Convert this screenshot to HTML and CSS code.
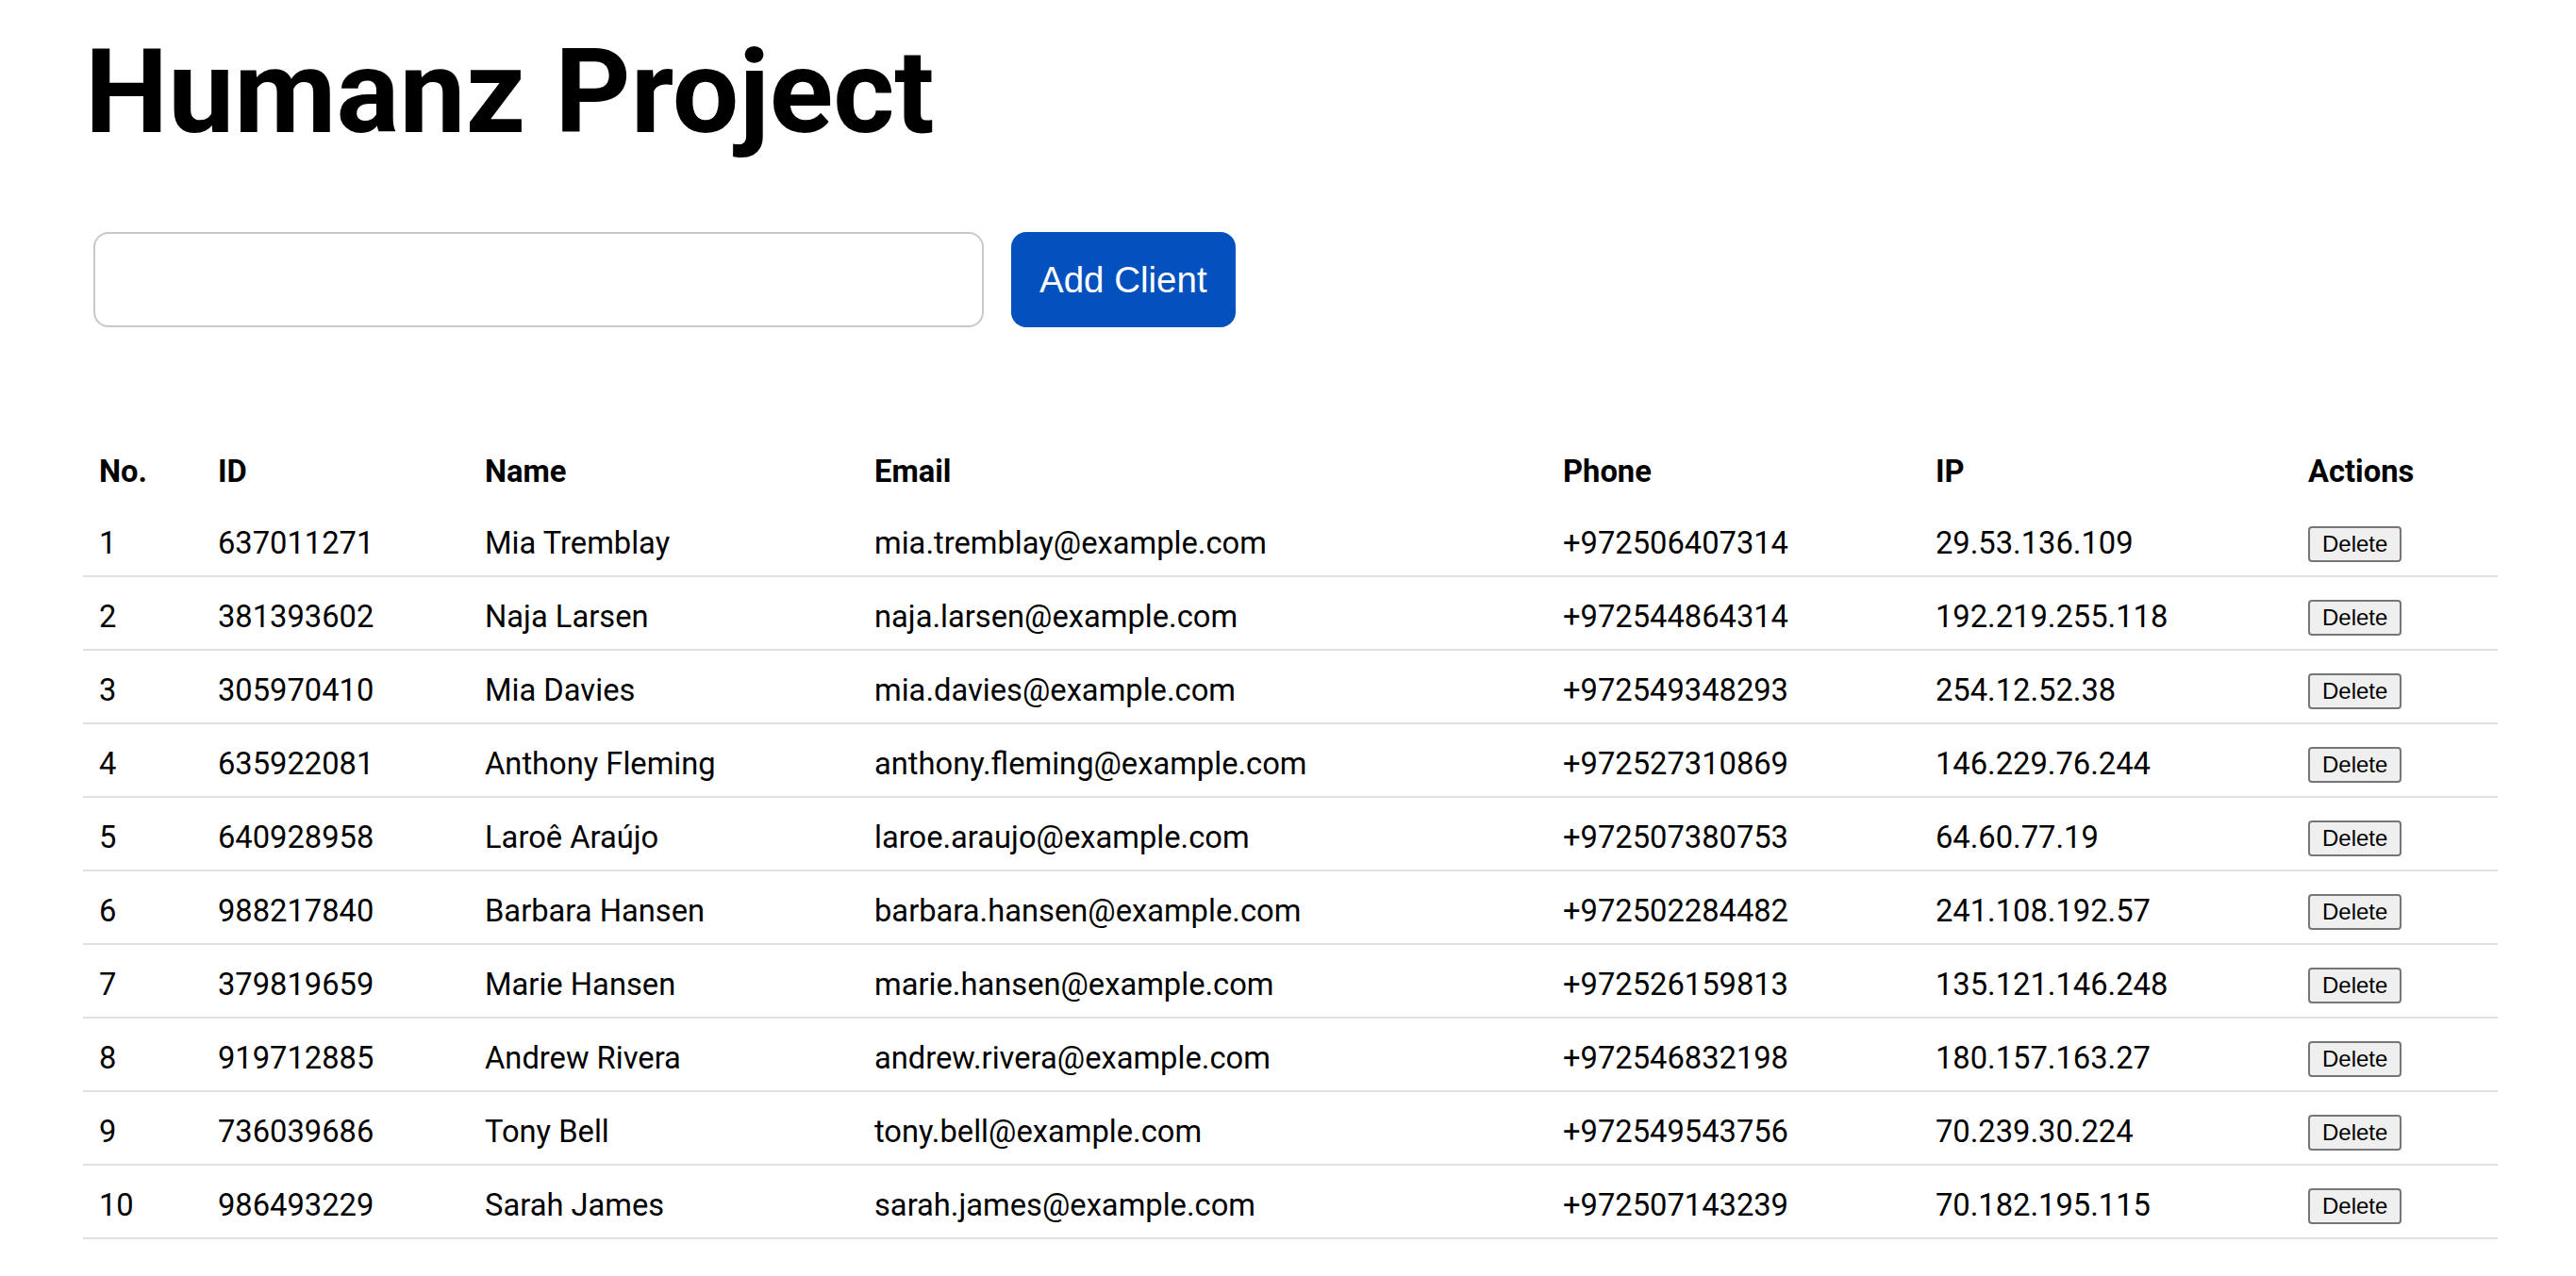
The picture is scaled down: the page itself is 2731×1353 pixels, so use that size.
FILE: index.html
```html
<!DOCTYPE html>
<html lang="en">
<head>
<meta charset="utf-8">
<title>Humanz Project</title>
<link rel="stylesheet" href="styles.css">
</head>
<body>
<div class="page">
  <h1 class="title">Humanz Project</h1>
  <form class="add-form">
    <input class="client-input" type="text">
    <button class="add-btn" type="button">Add Client</button>
  </form>
  <table class="clients">
    <colgroup>
      <col class="c-no"><col class="c-id"><col class="c-name"><col class="c-email"><col class="c-phone"><col class="c-ip"><col class="c-act">
    </colgroup>
    <thead>
      <tr><th>No.</th><th>ID</th><th>Name</th><th>Email</th><th>Phone</th><th>IP</th><th>Actions</th></tr>
    </thead>
    <tbody>
      <tr><td>1</td><td>637011271</td><td>Mia Tremblay</td><td>mia.tremblay@example.com</td><td>+972506407314</td><td>29.53.136.109</td><td><button class="del-btn" type="button">Delete</button></td></tr>
      <tr><td>2</td><td>381393602</td><td>Naja Larsen</td><td>naja.larsen@example.com</td><td>+972544864314</td><td>192.219.255.118</td><td><button class="del-btn" type="button">Delete</button></td></tr>
      <tr><td>3</td><td>305970410</td><td>Mia Davies</td><td>mia.davies@example.com</td><td>+972549348293</td><td>254.12.52.38</td><td><button class="del-btn" type="button">Delete</button></td></tr>
      <tr><td>4</td><td>635922081</td><td>Anthony Fleming</td><td>anthony.fleming@example.com</td><td>+972527310869</td><td>146.229.76.244</td><td><button class="del-btn" type="button">Delete</button></td></tr>
      <tr><td>5</td><td>640928958</td><td>Laroê Araújo</td><td>laroe.araujo@example.com</td><td>+972507380753</td><td>64.60.77.19</td><td><button class="del-btn" type="button">Delete</button></td></tr>
      <tr><td>6</td><td>988217840</td><td>Barbara Hansen</td><td>barbara.hansen@example.com</td><td>+972502284482</td><td>241.108.192.57</td><td><button class="del-btn" type="button">Delete</button></td></tr>
      <tr><td>7</td><td>379819659</td><td>Marie Hansen</td><td>marie.hansen@example.com</td><td>+972526159813</td><td>135.121.146.248</td><td><button class="del-btn" type="button">Delete</button></td></tr>
      <tr><td>8</td><td>919712885</td><td>Andrew Rivera</td><td>andrew.rivera@example.com</td><td>+972546832198</td><td>180.157.163.27</td><td><button class="del-btn" type="button">Delete</button></td></tr>
      <tr><td>9</td><td>736039686</td><td>Tony Bell</td><td>tony.bell@example.com</td><td>+972549543756</td><td>70.239.30.224</td><td><button class="del-btn" type="button">Delete</button></td></tr>
      <tr><td>10</td><td>986493229</td><td>Sarah James</td><td>sarah.james@example.com</td><td>+972507143239</td><td>70.182.195.115</td><td><button class="del-btn" type="button">Delete</button></td></tr>
    </tbody>
  </table>
</div>
</body>
</html>
```
FILE: styles.css
```css
html, body {
  margin: 0;
  padding: 0;
  background: #ffffff;
}

body {
  font-family: "Roboto", "Open Sans", sans-serif;
  color: #000000;
}

.page {
  padding: 0 83px 0 88px;
}

.title {
  margin: 35px 0 0 0;
  font-family: "Roboto", sans-serif;
  font-weight: 700;
  font-size: 125px;
  line-height: 125px;
  letter-spacing: 0;
  padding-left: 2px;
}

.add-form {
  display: flex;
  align-items: stretch;
  gap: 29px;
  margin: 86px 0 0 11px;
}

.client-input {
  box-sizing: border-box;
  width: 944px;
  height: 101px;
  border: 2px solid #c8c8c8;
  border-radius: 16px;
  background: #ffffff;
  padding: 0 20px;
  font-size: 32px;
  outline: none;
}

.add-btn {
  box-sizing: border-box;
  height: 101px;
  padding: 0 30px;
  border: none;
  border-radius: 16px;
  background: #0351bf;
  color: #ffffff;
  font-family: "Liberation Sans", Arial, sans-serif;
  font-size: 38.5px;
}

.clients {
  margin-top: 111px;
  width: 2560px;
  table-layout: fixed;
  border-collapse: collapse;
  font-size: 32.7px;
}

.c-no { width: 126px; }
.c-id { width: 283px; }
.c-name { width: 413px; }
.c-email { width: 730px; }
.c-phone { width: 395px; }
.c-ip { width: 395px; }
.c-act { width: 218px; }

.clients th {
  height: 69px;
  padding: 7px 17px 0;
  text-align: left;
  font-weight: 700;
  vertical-align: middle;
}

.clients td {
  height: 69px;
  padding: 7px 17px 0;
  text-align: left;
  font-weight: 400;
  vertical-align: middle;
  border-bottom: 2px solid #e2e2e2;
  white-space: nowrap;
}

.del-btn {
  box-sizing: border-box;
  height: 38px;
  padding: 0 13px;
  border: 2px solid #767676;
  border-radius: 4px;
  background: #efefef;
  color: #000000;
  font-family: "Liberation Sans", Arial, sans-serif;
  font-size: 24px;
  line-height: 1;
}
```
